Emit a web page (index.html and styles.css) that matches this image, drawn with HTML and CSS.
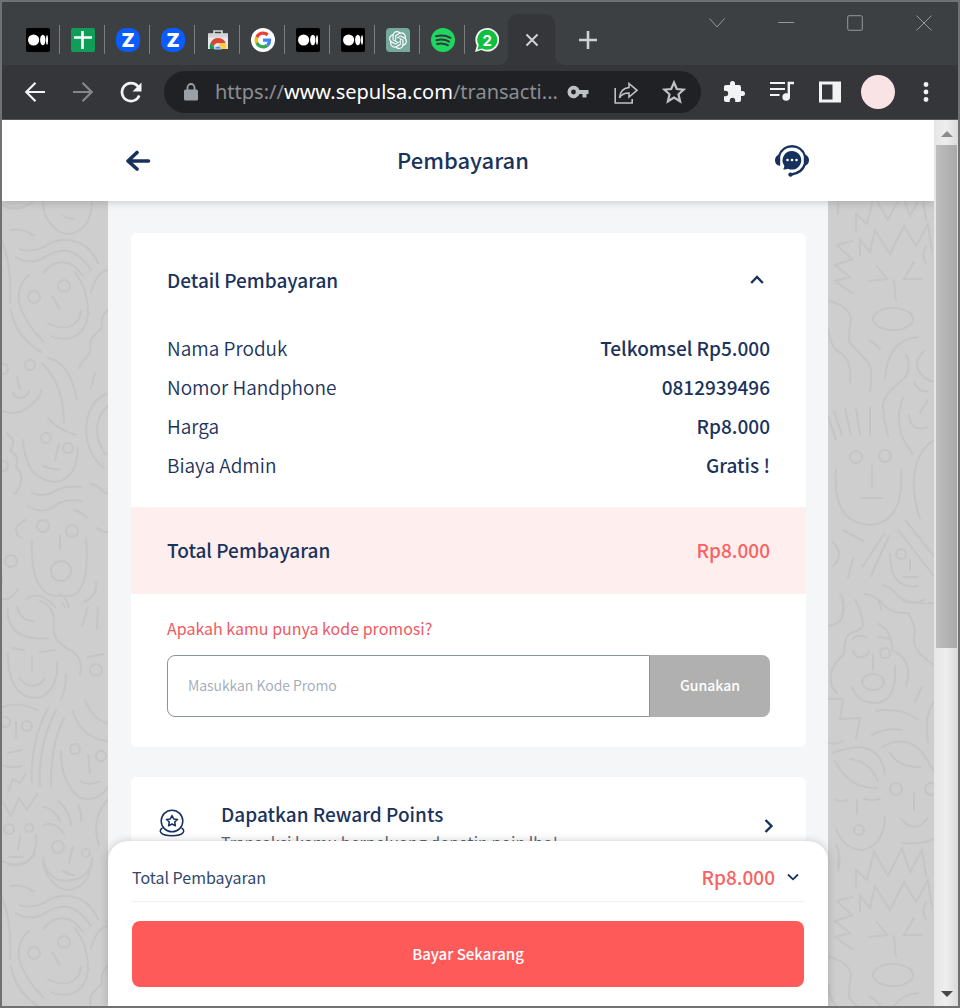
FILE: index.html
```html
<!DOCTYPE html>
<html lang="id">
<head>
<meta charset="utf-8">
<title>Pembayaran</title>
<link rel="stylesheet" href="styles.css">
</head>
<body>
<svg class="defs" width="0" height="0" aria-hidden="true">
  <defs>
    <symbol id="medium" viewBox="0 0 24 24"><rect width="24" height="24" rx="2" fill="#000"/><circle cx="7.6" cy="12" r="5.6" fill="#fff"/><ellipse cx="16.8" cy="12" rx="2.7" ry="5.2" fill="#fff"/><ellipse cx="21" cy="12" rx="1" ry="4.7" fill="#fff"/></symbol>
    <symbol id="zoom" viewBox="0 0 24 24"><rect width="24" height="24" rx="10" fill="#0b5cff"/><text x="12" y="19" text-anchor="middle" class="zoom-letter">Z</text></symbol>
    <g id="left-faces">
      <path d="M0 14q12 8 26 2 8-4 9-10M43 12q0 14 8 22 8 10 17 10 16-2 21-16 3-8 3-16M62 25q6 4 12 4M11 40q12-2 23 6M20 59q10 4 24-2 14-10 30-6 16 4 24 22M16 67q12 8 26 2 14-10 26-8 14 4 23 19M43 83q6-8 14-10 14-4 26 13M29 85q-12 10-10 26 4 20 24 40M75 82q14 20 13 42-2 20-18 24-12 2-19-2M52 106l8 13M48 133q10 6 20 4 12-4 13-16M0 47q12 24 10 66M11 120q4 26 30 42M107 80q-10 2-16 22M108 120q-8 6-6 18-10 8-12 14 2 10-4 16-6 6-7 10M42 173q22 22 22 60M48 168q22 4 29 42M95 183l-4 15M106 204q-18 8-20 34 0 26 18 40M108 216q-10 8-11 22 0 14 8 26M17 187l3 12M13 203q3 6 9 5 6-2 7-7M0 220q18 8 32-6 10-8 9-14M48 228q10 12 28 17M23 250q2 24 12 34 10 8 22 8 20-4 21-35M59 254l-4 16M43 276q8 4 17 3M6 243q10 6 6 14l-2 4q10 4 6 16 8 8 4 18-2 8-6 8M32 303q10 4 20 0 10-8 29-6M28 316q12 8 24 2 10-10 30-7M74 320q8 2 13 8M91 294q6 0 11 7 2 2 6 2M26 330q-10 4-10 10t6 8M97 338q4 4 11 4M32 350q-2 46 18 55 14 2 24 0 16-10 12-57M60 345v15M2 386q0 6 0 6M0 409q12 2 18-10M96 392q2 14-12 20M26 409q14-10 29 8M62 413l3 4"/>
      <path d="M8 418q-2 18 12 26 12 6 28 4M17 417q4 14 17 14M40 411q14 4 14 22-2 10 4 18 8 8 14 10 12 8 8 24M60 404q8 6 9 14M88 417l-6 19M98 417l-1 22M12 458l12 2M40 462l16-2M88 467l16-3M8 464q0 34 18 42 14 6 24-6 8-10 7-28M32 467v14M20 488q4 8 14 8 8-2 11-8M66 485q0 14-5 25M85 510q8 20 24 24M73 521q8 28 36 30M0 518q16-8 37 2M16 532v16M8 563l14-3M0 575q14 4 21 1M48 518q-18 34-16 74M56 520q-18 34-16 76M64 528q-14 28-13 70M61 561q0 22 8 34 8 16 22 14 10-2 17-12M88 565l2 18M80 591q10 6 20 0M3 612l8 14 8-18 8 12 10-16M8 602l5-13 7 4 6-9M43 617q10 0 17 14M58 611q12 10 13 24M78 615q4 8 3 16M108 609q-18 20-9 46M44 635q12-4 20 9M20 646l-2 14M9 667h14M36 645q2 18-10 28-10 4-18 1M44 672q2 12 14 18 12 2 22-2 10-6 12-16M73 657l-4 16M64 681l8 4"/>
      <circle cx="64" cy="96" r="6"/><circle cx="34" cy="107" r="6"/><circle cx="30" cy="175" r="5"/><circle cx="3" cy="179" r="5"/><circle cx="46" cy="248" r="5"/><circle cx="68" cy="258" r="5"/><circle cx="3" cy="276" r="5"/><circle cx="43" cy="336" r="6"/><circle cx="72" cy="341" r="6"/><circle cx="61" cy="381" r="10"/><circle cx="11" cy="371" r="6"/><circle cx="96" cy="480" r="6"/><circle cx="5" cy="532" r="5"/><circle cx="27" cy="536" r="5"/><circle cx="75" cy="559" r="5"/><circle cx="101" cy="566" r="5"/><circle cx="9" cy="639" r="5"/><circle cx="29" cy="638" r="4"/><circle cx="58" cy="657" r="6"/><circle cx="86" cy="663" r="4"/>
    </g>
    <g id="right-faces">
      <path d="M10 12v12M28 42V24l11 10 7-28 14 24L74 2l8 24 12-22 4 26M32 66V50l10 12 5-22 15 24 14-28 12 20 12-22 4 28M24 51L9 55l15 14-17 6 15 12-15 4 17 12M49 76l10 13-18 2M86 72L76 89h18M66 90l2 21M98 56q-5 8 0 18M0 111q20 4 23 17-2 14-2 24 12 12 20 22 4 8 1 28M0 138q2 20 14 26 10 8 8 28M41 150q6 3 11 9M57 190q2-40 33-43M78 164q8 18-6 28-18 14-17 26 1 14 5 28M96 161q-14 14 0 26 4 4 10 5M75 208q-12 30 10 56M100 210l-8 13M81 225q2 18 18 12M86 192q6 12 14 9M6 221l8 24M17 218l6 27M28 219l4 26M42 217v28M0 226l8 24M8 280q-4 54 35 55 34-4 30-56M44 275v23M33 308h21M15 340l20 11M56 344l-21 32M61 346l-18 40M25 368l-5 20M5 352q12 14 0 24M70 340l36 46M78 331l30 38M82 370v10M76 387h13M62 364q0 36 28 32M55 395q8 2 14 10 10 10 38 8M37 404q16 2 16 16M12 404q6 6 2 22M106 250q-22 14-20 50 2 20 6 28"/>
      <path d="M14 410q6 24-14 26M27 410q8 14 8 26-2 4-14 8-5 4-5 20-16 14-13 28 1 7 6 11M52 410q8 14 28 13 9 14 6 24-2 14 20 28M74 410q10 6 22 0M50 434q14 6 14 26 22 10 14 36M25 449q4-5 14-2M50 447l12 2M25 461q4 8 8 6 6 0 8-6M45 465v15M67 476q2 34-18 37-20 0-25-16M94 497l-7 15M0 509h15l-3 20 20-1-4 21M48 521q24-4 41 8M44 545q14-8 30-5M0 553q8 2 15-2M5 563q46-18 52 21M7 571q14 28 42 27M22 569q20 2 28 22M54 557q28-16 46 14 2 6 6 10M62 563q8 14 30 14M7 610q6 2 13 0M36 609q8 2 16 0M29 610v14M8 639q8 20 26 21 22-4 23-34M86 603v17M73 629q14 16 27-1M74 653q18 2 32-4M8 655q6 12 2 26M106 512q-10 12-6 40"/>
      <ellipse cx="65" cy="129" rx="20" ry="11"/><circle cx="28" cy="267" r="6"/><circle cx="57" cy="266" r="6"/><circle cx="73" cy="364" r="5"/><circle cx="57" cy="463" r="5"/><ellipse cx="45" cy="492" rx="11" ry="8"/><circle cx="68" cy="599" r="6"/><circle cx="103" cy="599" r="6"/><circle cx="31" cy="640" r="5"/>
    </g>
  </defs>
</svg>

<div class="window">
  <header class="tabstrip">
    <nav class="tabs" aria-label="Tab">
      <button class="tab" aria-label="Medium"><svg class="favicon"><use href="#medium"/></svg></button>
      <button class="tab" aria-label="Spreadsheet"><svg class="favicon" viewBox="0 0 24 24"><rect width="24" height="24" rx="2" fill="#0f9d58"/><path d="M11.500 3v18M3 9.500h18" stroke="#fff" stroke-width="2.600"/></svg></button>
      <button class="tab" aria-label="Zoom"><svg class="favicon"><use href="#zoom"/></svg></button>
      <button class="tab" aria-label="Zoom"><svg class="favicon"><use href="#zoom"/></svg></button>
      <button class="tab" aria-label="Web Store"><svg class="favicon" viewBox="0 0 24 24"><path d="M8 6V3h8V6" fill="none" stroke="#d5d7d9" stroke-width="1.600"/><path d="M2 5.500h20V21H2z" fill="#e9e9ea"/><path d="M2 5.500h20v4H2z" fill="#d3d5d7"/><path d="M4 21a8.500 8.500 0 0 1 .8-6.500L9.500 21z" fill="#0f9d58"/><path d="M4.600 15a8.200 8.200 0 0 1 15 0H12a4 4 0 0 0-4 3.500z" fill="#db4437"/><path d="M12 15h7.600a8 8 0 0 1 .6 6h-6z" fill="#ffcd40"/><path d="M8.300 21a3.800 3.800 0 0 1 7.400 0z" fill="#4285f4" stroke="#eee" stroke-width=".8"/></svg></button>
      <button class="tab" aria-label="Google"><svg class="favicon" viewBox="0 0 24 24"><circle cx="12" cy="12" r="12" fill="#fff"/><g transform="translate(3.500 3.500) scale(.355)"><path fill="#ea4335" d="M24 9.500c3.540 0 6.710 1.220 9.210 3.600l6.850-6.850C35.900 2.380 30.470 0 24 0 14.620 0 6.510 5.380 2.560 13.220l7.980 6.190C12.430 13.720 17.740 9.500 24 9.500z"/><path fill="#4285f4" d="M46.980 24.550c0-1.570-.15-3.090-.38-4.550H24v9.020h12.940c-.58 2.960-2.260 5.480-4.780 7.180l7.730 6c4.510-4.180 7.090-10.360 7.090-17.650z"/><path fill="#fbbc05" d="M10.530 28.590c-.48-1.450-.76-2.990-.76-4.590s.27-3.140.76-4.590l-7.980-6.190C.92 16.460 0 20.120 0 24s.92 7.540 2.560 10.780l7.970-6.190z"/><path fill="#34a853" d="M24 48c6.480 0 11.930-2.130 15.890-5.810l-7.730-6c-2.150 1.450-4.920 2.300-8.160 2.300-6.260 0-11.570-4.220-13.470-9.910l-7.980 6.190C6.510 42.620 14.620 48 24 48z"/></g></svg></button>
      <button class="tab" aria-label="Medium"><svg class="favicon"><use href="#medium"/></svg></button>
      <button class="tab" aria-label="Medium"><svg class="favicon"><use href="#medium"/></svg></button>
      <button class="tab" aria-label="ChatGPT"><svg class="favicon" viewBox="0 0 24 24"><path d="M4 0h16a4 4 0 0 1 4 4v20H4a4 4 0 0 1-4-4V4a4 4 0 0 1 4-4z" fill="#75a99c"/><path transform="translate(3 3) scale(.75)" fill="#fff" d="M22.282 9.821a5.985 5.985 0 0 0-.516-4.911 6.046 6.046 0 0 0-6.510-2.900A6.065 6.065 0 0 0 4.981 4.182a5.985 5.985 0 0 0-3.998 2.900 6.046 6.046 0 0 0 .743 7.097 5.980 5.980 0 0 0 .511 4.911 6.051 6.051 0 0 0 6.515 2.900A5.985 5.985 0 0 0 13.260 24a6.056 6.056 0 0 0 5.772-4.206 5.989 5.989 0 0 0 3.998-2.900 6.056 6.056 0 0 0-.748-7.073zm-9.022 12.608a4.476 4.476 0 0 1-2.876-1.041l.142-.080 4.778-2.758a.795.795 0 0 0 .393-.681v-6.737l2.020 1.169a.071.071 0 0 1 .038.052v5.583a4.504 4.504 0 0 1-4.495 4.494zm-9.661-4.125a4.471 4.471 0 0 1-.535-3.014l.142.085 4.783 2.758a.771.771 0 0 0 .781 0l5.843-3.369v2.332a.080.080 0 0 1-.033.062L9.740 19.950a4.499 4.499 0 0 1-6.141-1.646zM2.341 7.896a4.485 4.485 0 0 1 2.366-1.973V11.600a.766.766 0 0 0 .388.677l5.814 3.354-2.020 1.169a.076.076 0 0 1-.071 0l-4.830-2.787A4.504 4.504 0 0 1 2.341 7.872zm16.596 3.856L13.104 8.364 15.119 7.200a.076.076 0 0 1 .071 0l4.830 2.791a4.494 4.494 0 0 1-.677 8.104v-5.677a.790.790 0 0 0-.407-.667zm2.011-3.023l-.142-.085-4.774-2.782a.776.776 0 0 0-.785 0L9.409 9.230V6.897a.066.066 0 0 1 .028-.062l4.830-2.787a4.499 4.499 0 0 1 6.680 4.660zM8.307 12.863l-2.020-1.164a.080.080 0 0 1-.038-.057V6.074a4.499 4.499 0 0 1 7.376-3.454l-.142.081L8.704 5.459a.795.795 0 0 0-.393.681zm1.098-2.365l2.602-1.500 2.607 1.500v2.999l-2.597 1.500-2.607-1.500z"/></svg></button>
      <button class="tab" aria-label="Spotify"><svg class="favicon" viewBox="0 0 24 24"><circle cx="12" cy="12" r="12" fill="#1ed760"/><path d="M5 8.300q8-2 14.500 1.500M5.500 12.200q7-1.800 12.700 1.400M6 15.900q6-1.300 10.800 1.300" fill="none" stroke="#37393c" stroke-width="2" stroke-linecap="round"/></svg></button>
      <button class="tab tab-last" aria-label="WhatsApp"><svg class="favicon" viewBox="0 0 24 24"><path d="M12.200 0A11.800 11.800 0 1 1 6.500 22L0 24l1.800-6.500A11.800 11.800 0 0 1 12.200 0z" fill="#f2f4f3"/><path d="M12.200 1.800a10 10 0 1 1-5 18.600L2.400 21.800l1.400-4.700A10 10 0 0 1 12.200 1.800z" fill="#0fbf3d"/><text x="12.200" y="17.500" text-anchor="middle" class="unread">2</text></svg></button>
      <button class="tab tab-active" aria-label="Tutup tab"><svg width="14" height="14" viewBox="0 0 14 14"><path d="M1.500 1.500l11 11M12.500 1.500l-11 11" stroke="#cfd1d3" stroke-width="2"/></svg></button>
    </nav>
    <button class="newtab" aria-label="Tab baru"><svg width="18" height="18" viewBox="0 0 18 18"><path d="M9 0v18M0 9h18" stroke="#cfd1d3" stroke-width="2.600"/></svg></button>
    <div class="controls">
      <button aria-label="Cari tab"><svg width="16" height="16" viewBox="0 0 16 16"><path d="M.5 3.500L8 12l7.500-8.500"/></svg></button>
      <button aria-label="Kecilkan"><svg width="16" height="16" viewBox="0 0 16 16"><path d="M0 7.500h16"/></svg></button>
      <button aria-label="Besarkan"><svg width="16" height="16" viewBox="0 0 16 16"><rect x=".7" y=".7" width="14.600" height="14.600" rx="1.500"/></svg></button>
      <button aria-label="Tutup"><svg width="16" height="16" viewBox="0 0 16 16"><path d="M.5.5l15 15M15.500.5l-15 15"/></svg></button>
    </div>
  </header>

  <div class="toolbar">
    <button aria-label="Kembali"><svg class="icon" viewBox="0 0 24 24"><path d="M22 12H3.500M12.500 2.800L3.300 12l9.200 9.200" class="line"/></svg></button>
    <button aria-label="Maju"><svg class="icon icon-off" viewBox="0 0 24 24"><path d="M2 12h18.500M11.500 2.800l9.200 9.200-9.200 9.200" class="line"/></svg></button>
    <button aria-label="Muat ulang"><svg class="icon" viewBox="0 0 24 24"><path d="M20.300 15.500A9 9 0 1 1 18.600 6l2 2" class="line thick"/><path d="M22.500 2.500v9H13.500z" fill="currentColor"/></svg></button>
    <div class="omnibox">
      <svg class="lock" width="14" height="18" viewBox="0 0 14 18"><path d="M1.500 6.500h11A1.500 1.500 0 0 1 14 8v8a1.500 1.500 0 0 1-1.500 1.500h-11A1.500 1.500 0 0 1 0 16V8a1.500 1.500 0 0 1 1.500-1.500z" fill="#9aa0a6" /><path d="M3.500 7V4.500a3.500 3.500 0 0 1 7 0V7" fill="none" stroke="#9aa0a6" stroke-width="1.800"/></svg>
      <a class="url" href="#">https://<span>www.sepulsa.com</span>/transacti...</a>
      <button aria-label="Kata sandi"><svg class="icon icon-soft" viewBox="0 0 24 24"><path fill-rule="evenodd" fill="currentColor" d="M13.500 10A6.200 6.200 0 1 0 13.500 14H16.500V17.500H20.500V14H22.500V10zM7.500 9.600a2.400 2.400 0 1 1 0 4.800 2.400 2.400 0 0 1 0-4.800z"/></svg></button>
      <button aria-label="Bagikan"><svg class="icon icon-soft" viewBox="0 0 24 24"><path d="M1.200 8v15h17v-4" class="line thin"/><path d="M15 3.500l8 6.800-8 6.700v-4q-7 0-9.500 5 .5-9.500 9.500-10.500z" class="line thin"/></svg></button>
      <button aria-label="Bookmark"><svg class="icon icon-soft" viewBox="0 0 24 24"><path d="M12 2.500l2.800 6.500 7 .6-5.300 4.700 1.600 7L12 17.500l-6.100 3.800 1.600-7L2.200 9.600l7-.6z" class="line"/></svg></button>
    </div>
    <button aria-label="Ekstensi"><svg class="icon" viewBox="0 0 24 24"><path fill="currentColor" d="M20.500 11H19V7c0-1.100-.9-2-2-2h-4V3.500a2.500 2.500 0 0 0-5 0V5H4c-1.100 0-2 .9-2 2v3.800h1.500a2.700 2.700 0 0 1 0 5.400H2V20c0 1.100.9 2 2 2h3.800v-1.500a2.700 2.700 0 0 1 5.400 0V22H17c1.100 0 2-.9 2-2v-4h1.500a2.500 2.500 0 0 0 0-5z"/></svg></button>
    <button aria-label="Kontrol media"><svg class="icon" viewBox="0 0 24 24"><path d="M0 3h15M0 9h15M0 15h9.500" stroke="currentColor" stroke-width="2.200"/><path d="M18.800 16.500V3H24" fill="none" stroke="currentColor" stroke-width="2.400"/><circle cx="16.200" cy="17" r="3.800" fill="currentColor"/></svg></button>
    <button aria-label="Panel samping"><svg class="icon" viewBox="0 0 24 24"><path fill="currentColor" fill-rule="evenodd" d="M1 1.500h22v21H1zM4 4.500v15h10.500v-15z"/></svg></button>
    <button class="avatar" aria-label="Profil"></button>
    <button aria-label="Menu"><svg class="icon" viewBox="0 0 24 24"><g fill="currentColor"><circle cx="12" cy="4.500" r="2.400"/><circle cx="12" cy="12" r="2.400"/><circle cx="12" cy="19.500" r="2.400"/></g></svg></button>
  </div>

  <div class="viewport">
    <div class="page">
      <header class="topbar">
        <div class="topbar-inner">
          <a href="#" aria-label="Kembali"><svg width="26" height="22" viewBox="0 0 26 22"><path d="M23.500 11H3M12 2.500L3 11l9 8" fill="none" stroke="#17315e" stroke-width="3.600" stroke-linecap="round" stroke-linejoin="round"/></svg></a>
          <h1>Pembayaran</h1>
          <a href="#" aria-label="Bantuan"><svg width="34" height="32" viewBox="0 0 34 32"><path d="M4 11C8-2 26-2 30 11" fill="none" stroke="#17315e" stroke-width="2.400"/><path d="M30 19q-3 9-13.500 10.500" fill="none" stroke="#17315e" stroke-width="2.400"/><path d="M5.200 9.500v11.200C1.500 20.500 0 18 0 15s2-5.200 5.200-5.500zM28.800 9.500v11.200c3.700-.2 5.200-2.700 5.200-5.700s-2-5.200-5.200-5.500z" fill="#17315e"/><circle cx="15.500" cy="29.600" r="2.200" fill="#17315e"/><path d="M17 6a9.300 9.300 0 1 1-4 17.700c-1.700.8-3.300.9-5 .6 1.200-1.200 1.400-2.500 1.200-3.700A9.300 9.300 0 0 1 17 6z" fill="#17315e"/><g fill="#fff"><circle cx="12.500" cy="15" r="1.300"/><circle cx="17" cy="15" r="1.300"/><circle cx="21.500" cy="15" r="1.300"/></g></svg></a>
        </div>
      </header>
      <div class="stage">
        <svg class="faces" aria-hidden="true"><use href="#left-faces" x="-2" y="-11"/><use href="#left-faces" x="-2" y="645"/></svg>
        <main class="content">
          <section class="card">
            <div class="card-head">
              <h2>Detail Pembayaran</h2>
              <button aria-label="Tutup detail"><svg width="14" height="10" viewBox="0 0 14 10"><path d="M1.200 8L7 2l5.800 6" class="chev"/></svg></button>
            </div>
            <dl class="rows">
              <div><dt>Nama Produk</dt><dd>Telkomsel Rp5.000</dd></div>
              <div><dt>Nomor Handphone</dt><dd>0812939496</dd></div>
              <div><dt>Harga</dt><dd>Rp8.000</dd></div>
              <div><dt>Biaya Admin</dt><dd>Gratis !</dd></div>
            </dl>
            <div class="total"><span>Total Pembayaran</span><span class="price">Rp8.000</span></div>
            <form class="promo">
              <label for="promo">Apakah kamu punya kode promosi?</label>
              <div class="promo-field">
                <input id="promo" type="text" placeholder="Masukkan Kode Promo">
                <button type="button">Gunakan</button>
              </div>
            </form>
          </section>
          <a class="card reward" href="#">
            <svg width="26" height="28" viewBox="0 0 26 28"><g fill="none" stroke="#17315e" stroke-width="1.500" stroke-linejoin="round"><circle cx="13" cy="12" r="10.800"/><path d="M13 6.500l1.700 3.400 3.800.5-2.800 2.600.7 3.800-3.400-1.800-3.400 1.800.7-3.800-2.800-2.600 3.800-.5z"/><path d="M3.500 19C-1 21.500 1 26.800 13 26.800s14-5.300 9.500-7.800"/></g></svg>
            <div class="reward-text"><h2>Dapatkan Reward Points</h2><p>Transaksi kamu berpeluang dapatin poin lho!</p></div>
            <svg width="10" height="14" viewBox="0 0 10 14"><path d="M1.500 1l6 6-6 6" class="chev"/></svg>
          </a>
        </main>
        <svg class="faces" aria-hidden="true"><use href="#right-faces" y="-11"/><use href="#right-faces" y="645"/></svg>
      </div>
      <footer class="sheet">
        <div class="sheet-row">
          <span>Total Pembayaran</span>
          <strong class="price">Rp8.000</strong>
          <button aria-label="Lihat rincian"><svg width="12" height="8" viewBox="0 0 12 8"><path d="M1 1.500l5 4.800 5-4.800" class="chev small"/></svg></button>
        </div>
        <button class="pay">Bayar Sekarang</button>
      </footer>
    </div>
    <div class="scrollbar" aria-hidden="true">
      <svg width="12" height="6" viewBox="0 0 12 6"><path d="M0 6l6-6 6 6z" fill="#8c8c8c"/></svg>
      <div class="track"><div class="thumb"></div></div>
      <svg width="12" height="6" viewBox="0 0 12 6"><path d="M0 0l6 6 6-6z" fill="#484848"/></svg>
    </div>
  </div>
</div>
</body>
</html>
```
FILE: styles.css
```css
* { box-sizing: border-box; }
body { margin: 0; color: #1b335c; font-family: "Noto Sans CJK SC", "Noto Sans", sans-serif; }
button { margin: 0; padding: 0; border: 0; background: none; color: inherit; font: inherit; }
a { color: inherit; text-decoration: none; }
h1, h2, p, dl, dd { margin: 0; }
svg { display: block; flex: none; }
.defs { position: absolute; }

.window { display: flex; flex-direction: column; height: 100vh; border: 2px solid #707173; overflow: hidden; }

/* Tab strip */
.tabstrip { display: flex; align-items: flex-end; height: 63px; flex: none; padding-left: 13px; background: #3c4043; }
.tabs { display: flex; }
.tab { position: relative; display: grid; place-items: center; width: 45px; height: 51px; }
.tab:not(.tab-active, .tab-last)::after { content: ""; position: absolute; right: 0; top: 11px; width: 1px; height: 29px; background: #7b7e81; }
.favicon { width: 24px; height: 24px; }
.zoom-letter { font: 900 19px Inter, sans-serif; fill: #fff; }
.unread { font: 700 15px Inter, sans-serif; fill: #fff; }
.tab-last { width: 43px; }
.tab-active { width: 47px; background: #35363a; border-radius: 10px 10px 0 0; }
.tab-active::before { content: ""; position: absolute; left: -10px; right: -10px; bottom: 0; height: 10px; background: radial-gradient(circle at 0 0, transparent 10px, #35363a 10px) left / 10px 10px no-repeat, radial-gradient(circle at 100% 0, transparent 10px, #35363a 10px) right / 10px 10px no-repeat; }
.newtab { display: grid; place-items: center; width: 66px; height: 51px; }
.controls { display: flex; align-self: flex-start; gap: 53px; margin-left: auto; padding: 13px 26px 0 0; }
.controls svg { fill: none; stroke: #96999b; stroke-width: 1; }

/* Toolbar */
.toolbar { display: flex; align-items: center; gap: 24px; height: 55px; flex: none; padding: 0 20px 0 21px; background: #35363a; border-bottom: 1px solid #57585b; color: #f1f3f4; }
.icon { width: 24px; height: 24px; }
.icon-off { color: #85878a; }
.icon-soft { color: #bfc2c5; }
.line { fill: none; stroke: currentColor; stroke-width: 2.2; }
.thick { stroke-width: 2.6; }
.thin { stroke-width: 1.6; }
.omnibox { display: flex; align-items: center; gap: 24px; flex: 1; min-width: 0; height: 42px; margin: 0 -3px; padding: 0 15px 0 20px; border-radius: 21px; background: #202124; }
.lock { margin-right: -7px; }
.url { flex: 1; min-width: 0; overflow: hidden; white-space: nowrap; margin-right: -20px; color: #8b8e92; font: 20px/30px "Noto Sans", sans-serif; }
.url span { color: #fff; }
.avatar { width: 34px; height: 34px; margin: 0 -5px; flex: none; border-radius: 50%; background: #fae3e4; }

/* Page */
.viewport { display: flex; flex: 1; min-height: 0; }
.page { position: relative; display: flex; flex-direction: column; flex: 1; min-width: 0; overflow: hidden; }
.topbar { position: relative; z-index: 1; flex: none; background: #fff; box-shadow: 0 2px 8px rgba(0, 0, 0, .16); }
.topbar-inner { display: flex; align-items: center; justify-content: space-between; max-width: 720px; height: 81px; margin: 0 auto; padding: 0 19px 0 17px; }
h1 { padding-bottom: 4px; font-size: 22px; line-height: 32px; font-weight: 500; }
.stage { display: grid; grid-template-columns: 1fr minmax(0, 720px) 1fr; flex: 1; min-height: 0; background: #cecece; }
.faces { width: 100%; height: 100%; overflow: hidden; fill: none; stroke: #c5c5c5; stroke-width: 2; stroke-linecap: round; }
.content { display: flex; flex-direction: column; gap: 30px; padding: 32px 22px 0 23px; background: #f5f6f8; overflow: hidden; }
.card { flex: none; border-radius: 6px; background: #fff; }
.card-head { display: flex; align-items: center; justify-content: space-between; padding: 31px 42px 32px 36px; }
h2 { font-size: 19px; line-height: 32px; font-weight: 500; }
.chev { fill: none; stroke: #17315e; stroke-width: 2.4; }
.small { stroke-width: 1.8; }
.rows { padding: 0 36px 23px; }
.rows div { display: flex; justify-content: space-between; font-size: 19px; line-height: 39px; }
dt { font-weight: 350; }
dd { font-weight: 500; }
.total { display: flex; align-items: center; justify-content: space-between; height: 87px; padding: 0 36px 2px; background: #ffeeee; font-size: 19px; font-weight: 500; }
.price { color: #f96262; font-weight: 500; }
.promo { padding: 21px 36px 30px; }
.promo label { display: block; margin-bottom: 14px; color: #ef5a5f; font-size: 16px; line-height: 26px; font-weight: 400; }
.promo-field { display: flex; height: 62px; }
.promo-field input { flex: 1; min-width: 0; padding: 0 20px 2px; border: 1px solid #8a929d; border-radius: 8px 0 0 8px; background: #fff; color: #1b335c; font: 350 14px "Noto Sans CJK SC", sans-serif; }
.promo-field input::placeholder { color: #a0a9b7; opacity: 1; }
.promo-field button { width: 120px; padding-bottom: 2px; border-radius: 0 8px 8px 0; background: #b0b0b0; color: #fff; font-size: 14px; font-weight: 500; }
.reward { display: flex; align-items: center; padding: 21px 32px 27px 28px; }
.reward > svg:first-child { margin-bottom: 6px; }
.reward-text { flex: 1; padding-left: 36px; }
.reward-text p { color: #5b6577; font-size: 16px; line-height: 24px; font-weight: 400; }

/* Payment sheet over the page's lower edge */
.sheet { position: absolute; z-index: 1; left: 0; right: 0; bottom: 0; max-width: 720px; margin: 0 auto; padding: 0 24px 19px; border-radius: 20px 20px 0 0; background: #fff; box-shadow: 0 0 8px rgba(0, 0, 0, .2); }
.sheet-row { display: flex; align-items: center; height: 61px; margin-bottom: 19px; padding: 11px 5px 0 0; border-bottom: 1px solid #f0f1f3; color: #33476c; font-size: 16px; font-weight: 400; }
.sheet-row .price { margin: 0 12px 0 auto; font-size: 19px; }
.pay { display: block; width: 100%; height: 66px; padding-bottom: 2px; border-radius: 8px; background: #ff5a5a; color: #fff; font-size: 15px; font-weight: 500; }

.scrollbar { display: flex; flex-direction: column; align-items: center; width: 24px; flex: none; padding: 11px 1px 9px 2px; background: linear-gradient(90deg, #e6e6e6, #eee 50%, #dadada); }
.track { flex: 1; align-self: stretch; min-height: 0; padding: 8px 0; }
.thumb { height: 60%; background: linear-gradient(90deg, #bebebe, #a9a9a9); }
```
